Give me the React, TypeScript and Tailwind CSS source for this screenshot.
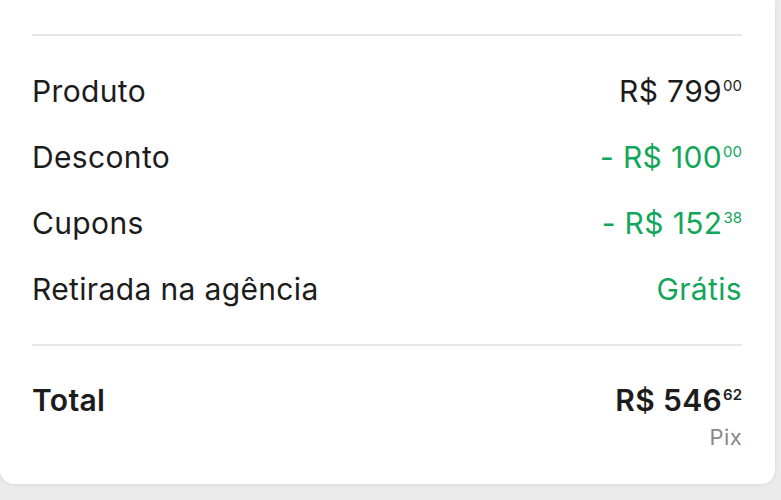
import React from "react";

const rows = [
  { label: "Produto", value: "R$ 799", cents: "00", green: false },
  { label: "Desconto", value: "- R$ 100", cents: "00", green: true },
  { label: "Cupons", value: "- R$ 152", cents: "38", green: true },
  { label: "Retirada na agência", value: "Grátis", cents: "", green: true },
];

function Price({ value, cents, className }: { value: string; cents: string; className: string }) {
  return (
    <span className={`inline-flex items-start leading-none ${className}`}>
      <span>{value}</span>
      {cents && <span className="ml-[1px] mt-[2px] text-[15px] leading-none tracking-normal">{cents}</span>}
    </span>
  );
}

export default function App() {
  return (
    <main
      className="h-[500px] w-[781px] overflow-hidden bg-[#ebebeb]"
      style={{ fontFamily: "Inter, 'Noto Sans', sans-serif" }}
    >
      <div className="h-[484px] w-[775px] rounded-b-[14px] bg-white pl-[32px] pr-[33px] shadow-[0_1px_4px_rgba(0,0,0,0.08)]">
        <div className="pt-[34px]">
          <div className="h-[2px] bg-[#e6e6e6]" />
        </div>

        <div className="flex flex-col pt-[22px]">
          {rows.map((r) => (
            <div
              key={r.label}
              className="flex h-[66px] items-center justify-between text-[30px] tracking-[0.35px] text-[#1c1c1c]"
            >
              <span className="leading-none">{r.label}</span>
              <Price
                value={r.value}
                cents={r.cents}
                className={r.green ? "text-[#12a65a]" : "text-[#1c1c1c]"}
              />
            </div>
          ))}
        </div>

        <div className="mt-[22px] h-[2px] bg-[#e6e6e6]" />

        <div className="flex justify-between pt-[39px] tracking-[0.35px]">
          <span className="text-[30px] font-semibold leading-none text-[#1c1c1c]">Total</span>
          <div className="flex flex-col items-end">
            <Price value="R$ 546" cents="62" className="text-[30px] font-semibold text-[#1c1c1c]" />
            <span className="mt-[11px] text-[22px] leading-none text-[#888888]">Pix</span>
          </div>
        </div>
      </div>
    </main>
  );
}
